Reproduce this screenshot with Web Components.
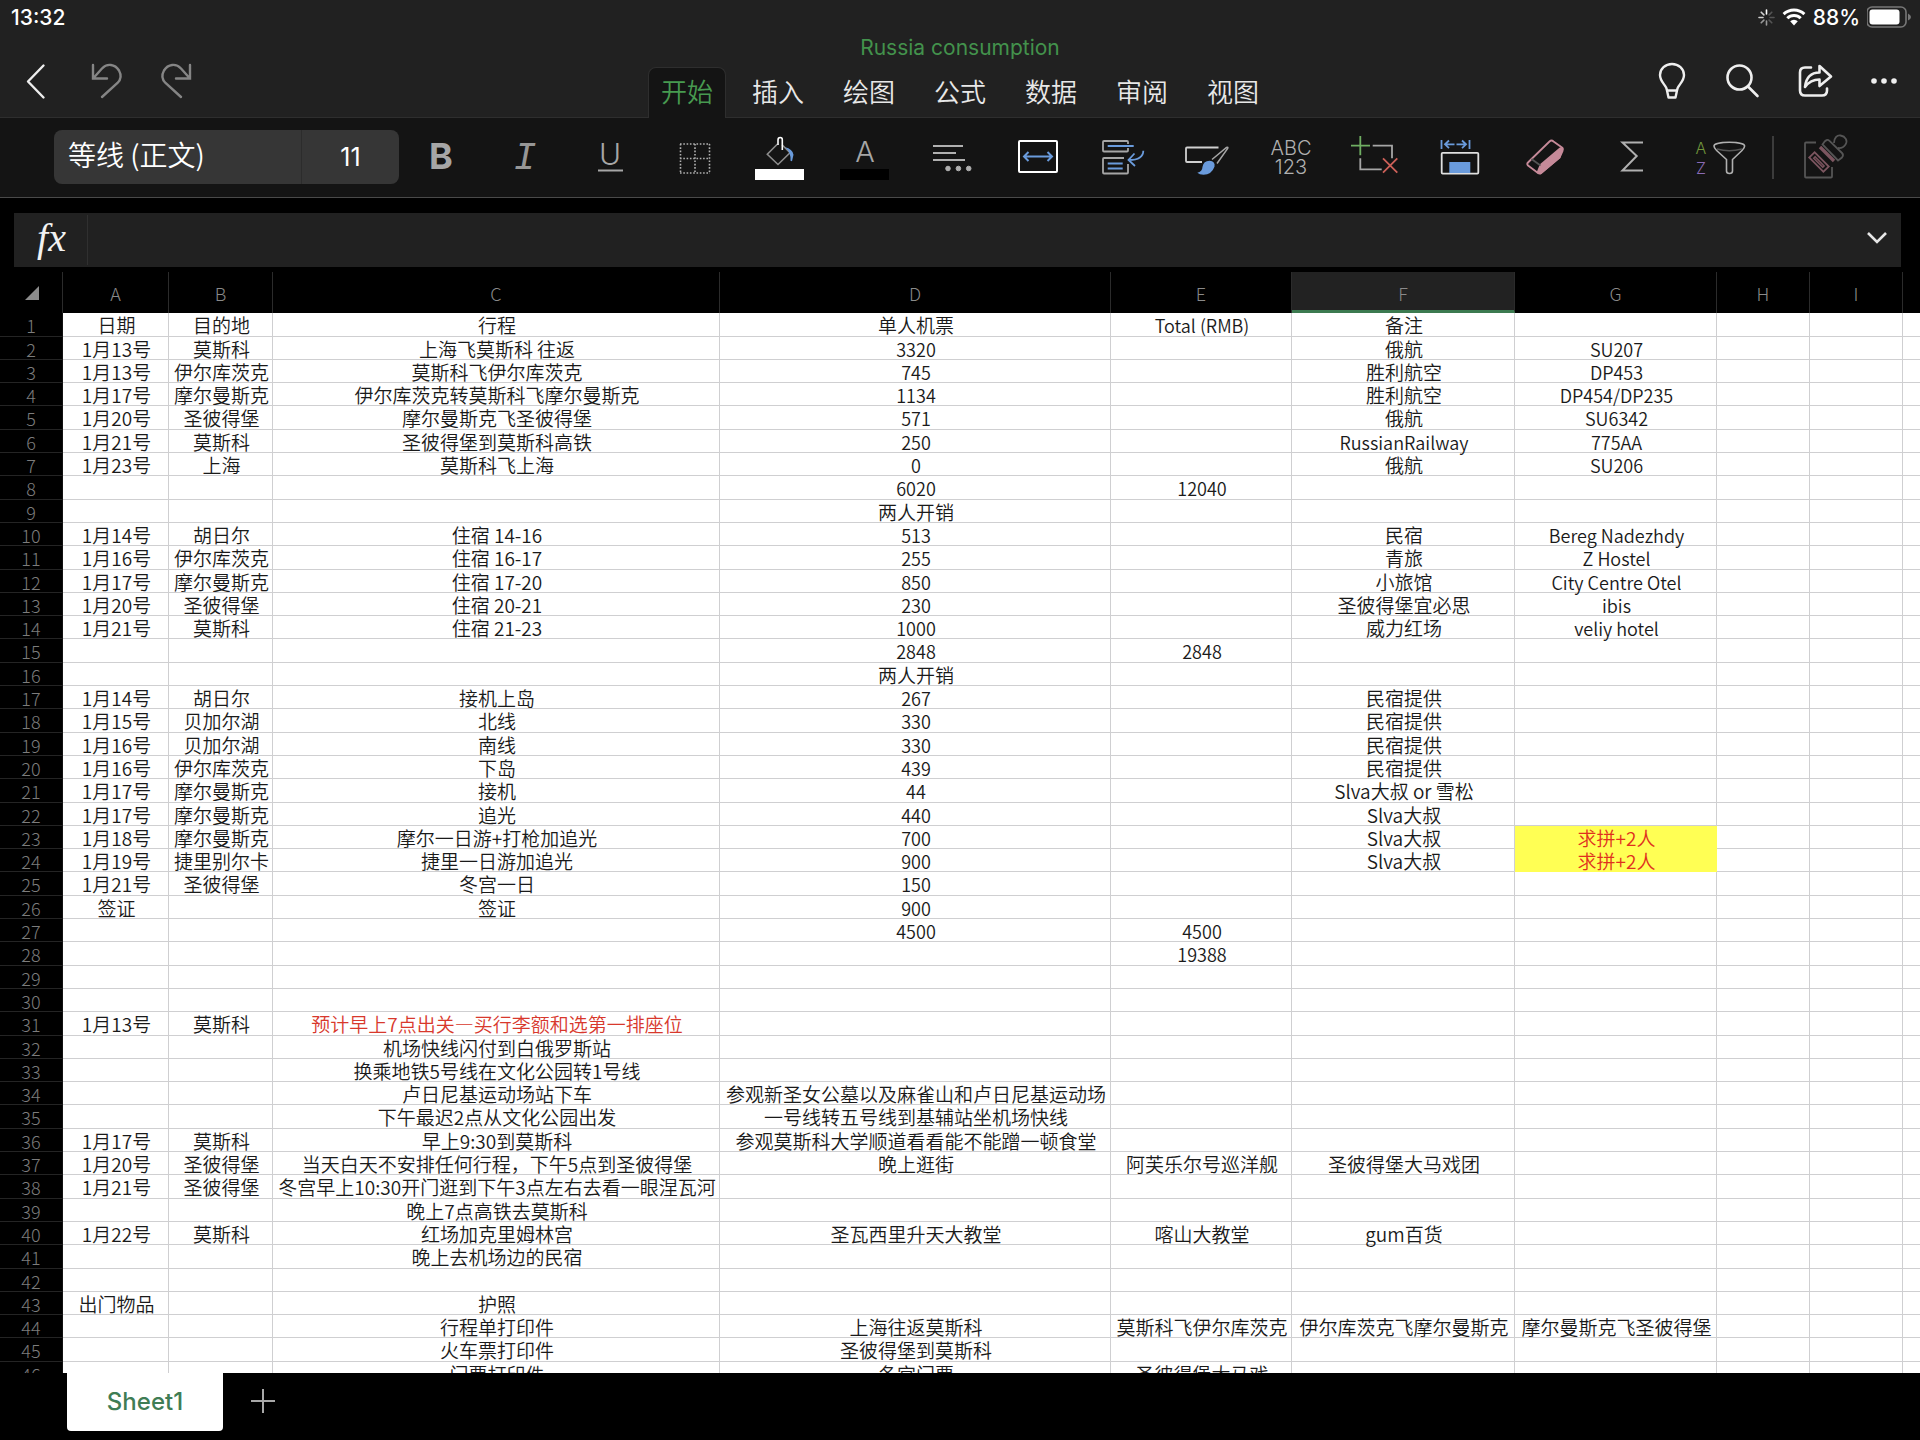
<!DOCTYPE html>
<html lang="zh-CN">
<head>
<meta charset="utf-8">
<title>Russia consumption</title>
<style>
  html, body { margin: 0; height: 100%; background: #000; }
  body { font-family: Inter, "Noto Sans CJK SC", sans-serif; color: #e6e6e6; overflow: hidden; }
</style>
</head>
<body>
<workbook-app></workbook-app>

<script>
const define = (name, html, setup) => {
  const tpl = document.createElement('template');
  tpl.innerHTML = html;
  customElements.define(name, class extends HTMLElement {
    constructor() {
      super();
      this.attachShadow({ mode: 'open' }).append(tpl.content.cloneNode(true));
    }
    connectedCallback() { if (setup) setup(this, this.shadowRoot); }
  });
};

/* Icon-only button; the drawing is slotted in */
define('icon-button', `
<style>
  :host { display: flex; }
  button { all: unset; flex: 1; display: flex; justify-content: center; cursor: pointer; }
  ::slotted(svg) { display: block; overflow: visible; }
</style>
<button type="button"><slot></slot></button>`, (el, root) => {
  root.querySelector('button').setAttribute('aria-label', el.getAttribute('label') || '');
});

define('ribbon-tab', `
<style>
  :host { display: block; }
  button { all: unset; box-sizing: border-box; height: 50px; padding: 0 12px 4px; border: 1px solid transparent; border-bottom: 0;
    border-radius: 8px 8px 0 0; font: 350 26px/44px "Noto Sans CJK SC", sans-serif; color: #e8e8e8; cursor: pointer; display: block; }
  :host([selected]) button { background: #141414; border-color: #2e2e2e; color: #479a50; height: 51px; padding-bottom: 5px; margin-bottom: -1px; }
</style>
<button type="button" role="tab"><slot></slot></button>`, (el, root) => {
  root.querySelector('button').setAttribute('aria-selected', el.hasAttribute('selected'));
});

define('status-bar', `
<style>
  :host { display: flex; justify-content: space-between; align-items: center; height: 34px; padding: 0 9px 0 11px; font-size: 21px; font-weight: 500; color: #fff; }
  .right { display: flex; align-items: center; gap: 7px; }
  svg { display: block; }
</style>
<span>13:32</span>
<div class="right">
  <svg width="17" height="17" viewBox="0 0 17 17" stroke-width="1.6" stroke-linecap="round" aria-hidden="true">
    <path d="M8.5 1v4" stroke="#fff"/><path d="M3.2 3.2l2.7 2.7M1 8.5h4" stroke="#cfcfcf"/><path d="M3.2 13.8l2.7-2.7M8.5 12v4" stroke="#999"/><path d="M13.8 13.8l-2.7-2.7M12 8.5h4M13.8 3.2l-2.7 2.7" stroke="#555"/>
  </svg>
  <svg width="24" height="18" viewBox="0 0 24 18" aria-hidden="true">
    <path d="M1.6 6.2a15 15 0 0 1 20.8 0M5.3 10.2a9.6 9.6 0 0 1 13.4 0" fill="none" stroke="#fff" stroke-width="3"/>
    <path d="M8.2 13.2a5.4 5.4 0 0 1 7.6 0L12 17.4z" fill="#fff"/>
  </svg>
  <span>88%</span>
  <svg width="44" height="26" viewBox="0 0 44 26" aria-hidden="true">
    <rect x="0" y="3" width="39" height="20" rx="5" fill="none" stroke="#777" stroke-width="1.6"/>
    <rect x="2.500" y="5.500" width="30" height="15" rx="3" fill="#fff"/>
    <path d="M41 9.500q3 1.500 3 3.500t-3 3.500z" fill="#777"/>
  </svg>
</div>`);

define('title-bar', `
<style>
  :host { display: grid; grid-template-columns: 1fr auto 1fr; height: 83px; border-bottom: 1px solid #2e2e2e; }
  .side { display: flex; align-items: flex-start; padding-top: 28px; }
  .left { padding-left: 16px; gap: 29px; }
  .right { justify-content: flex-end; padding-right: 15px; gap: 31px; }
  .mid { display: flex; flex-direction: column; }
  h1 { margin: 0; height: 33px; font-size: 21px; line-height: 27px; font-weight: 400; color: #43924c; text-align: center; }
  nav { display: flex; gap: 13px; }
</style>
<div class="side left">
  <icon-button label="返回"><svg width="40" height="40" viewBox="0 0 40 40" fill="none" stroke="#eee" stroke-width="2.4" stroke-linecap="round" stroke-linejoin="round"><path d="M27.500 3.500L12 19.500l15.500 16"/></svg></icon-button>
  <icon-button label="撤消"><svg width="40" height="40" viewBox="0 0 40 40" fill="none" stroke="#858585" stroke-width="2.4" stroke-linecap="round"><path d="M8 3v13.500h14M8.500 16L17 6.500C22 1 30 2 34 8.500c2.500 4.500 2 9-1.500 12.500L17 35"/></svg></icon-button>
  <icon-button label="恢复"><svg width="40" height="40" viewBox="0 0 40 40" fill="none" stroke="#858585" stroke-width="2.400" stroke-linecap="round"><path d="M36 3v13.500H22M35.500 16L27 6.500C22 1 14 2 10 8.500c-2.500 4.500-2 9 1.500 12.500L27 35"/></svg></icon-button>
</div>
<div class="mid">
  <h1>Russia consumption</h1>
  <nav role="tablist">
    <ribbon-tab selected>开始</ribbon-tab><ribbon-tab>插入</ribbon-tab><ribbon-tab>绘图</ribbon-tab><ribbon-tab>公式</ribbon-tab><ribbon-tab>数据</ribbon-tab><ribbon-tab>审阅</ribbon-tab><ribbon-tab>视图</ribbon-tab>
  </nav>
</div>
<div class="side right">
  <icon-button label="操作说明"><svg width="40" height="40" viewBox="0 0 40 40" fill="none" stroke="#eee" stroke-width="2.4" stroke-linejoin="round"><path d="M15 28.500c0-5-7-8-7-15.500a12 11 0 0 1 24 0c0 7.500-7 10.500-7 15.500l-1.500 7h-7zM15 28.500h10"/></svg></icon-button>
  <icon-button label="查找"><svg width="40" height="40" viewBox="0 0 40 40" fill="none" stroke="#eee" stroke-width="2.6" stroke-linecap="round"><circle cx="16.500" cy="15.500" r="12"/><path d="M25 24.500l9.500 9.500"/></svg></icon-button>
  <icon-button label="共享"><svg width="40" height="40" viewBox="0 0 40 40" fill="none" stroke="#eee" stroke-width="2.6" stroke-linecap="round" stroke-linejoin="round"><path d="M17 5.500h-6q-5 0-5 5v18q0 5 5 5h17q5 0 5-5v-2"/><path d="M11 25c1-9 6-14.500 14.500-14.500V4L37 14.500 25.500 24v-6.500C19 17.500 15 19.500 11 25z"/></svg></icon-button>
  <icon-button label="更多"><svg width="40" height="40" viewBox="0 0 40 40" fill="#eee"><circle cx="9" cy="19" r="2.8"/><circle cx="19" cy="19" r="2.8"/><circle cx="29" cy="19" r="2.8"/></svg></icon-button>
</div>`);

define('tool-bar', `
<style>
  :host { display: flex; height: 79px; padding: 0 40px 0 54px; background: #141414; border-bottom: 1px solid #4a4a4a; align-items: flex-start; }
  .font { display: flex; flex: 0 0 345px; box-sizing: border-box; height: 54px; margin-top: 12px; background: #363636; border-radius: 8px; }
  select { appearance: none; border: 0; background: none; color: #fff; height: 54px; margin: 0; outline: 0; box-sizing: border-box; }
  .name { flex: 1; padding: 0 0 6px 14px; border-right: 1px solid #2c2c2c; font: 350 28px/48px "Noto Sans CJK SC", sans-serif; }
  .size { width: 97px; text-align: center; text-align-last: center; font: 400 25px/54px Inter, sans-serif; }
  icon-button { flex: 0 1 85px; padding-top: 16px; }
  .wide { flex: 0 1 99px; }
  .last { flex: 0 1 107px; }
  hr { border: 0; width: 2px; height: 43px; margin: 18px -1px 0; background: #3c3c3c; }
  text { font-family: Inter, sans-serif; font-weight: 300; text-anchor: middle; }
</style>
<div class="font">
  <select class="name" aria-label="字体"><option>等线 (正文)</option></select>
  <select class="size" aria-label="字号"><option>11</option></select>
</div>
<icon-button label="加粗"><svg width="49" height="48"><text x="24" y="35" font-size="36" fill="#a6a6a6" style="font-weight:700">B</text></svg></icon-button>
<icon-button label="倾斜"><svg width="49" height="48"><text x="23" y="35" font-size="38" fill="#969696" style="font-family:'Liberation Mono',monospace;font-style:italic">I</text></svg></icon-button>
<icon-button label="下划线"><svg width="49" height="48"><text x="23" y="31" font-size="30" fill="#a6a6a6">U</text><path d="M11 36.500h25" stroke="#a6a6a6" stroke-width="2"/></svg></icon-button>
<icon-button label="边框"><svg width="49" height="48" fill="none" stroke="#b0b0b0" stroke-width="1.6" stroke-dasharray="1.600 1.700"><path d="M8.500 10v29M23 10v29M37.500 10v29M8 10h30M8 24.500h30M8 39h30"/></svg></icon-button>
<icon-button label="填充颜色"><svg width="49" height="48" fill="none" stroke-width="1.600"><path d="M20.500 10L10.300 20.300 21 30.500 33 18.700l-8-8" stroke="#8c8c8c"/><path d="M21 11V6q0-2.500 2.200-2.500T25.300 6v10" stroke="#fff"/><path d="M28 13.300q7.500 1.500 8.500 7.500l-1.500 6.500-1.500-.5q.5-9-5.500-13.500z" fill="#6a9bdc"/><rect x="-2" y="35" width="49" height="11" fill="#fff"/></svg></icon-button>
<icon-button label="字体颜色"><svg width="49" height="48"><text x="23" y="28" font-size="29" fill="#a6a6a6">A</text><rect x="-2" y="35" width="49" height="11" fill="#000"/></svg></icon-button>
<icon-button label="对齐"><svg width="49" height="48" fill="#b0b0b0" stroke="#b0b0b0"><path d="M6 12h30M6 19h23M6 26h32" stroke-width="2"/><circle cx="21" cy="34.500" r="2.300"/><circle cx="31.400" cy="34.500" r="2.300"/><circle cx="41.700" cy="34.500" r="2.300"/></svg></icon-button>
<icon-button label="合并"><svg width="49" height="48" fill="none" stroke-width="2"><rect x="7" y="7" width="38" height="31" rx="1" stroke="#fff"/><path d="M12 22.500h28M16.500 18L12 22.500l4.500 4.500M35.500 18l4.500 4.500-4.500 4.500" stroke="#6a9bdc"/></svg></icon-button>
<icon-button label="自动换行"><svg width="49" height="48" fill="none" stroke-width="1.800"><path d="M31 10V8q0-1-1-1H7q-1 0-1 1v8.500q0 1 1 1h23q1 0 1-1V14M27 24H7q-1 0-1 1v13.500q0 1 1 1h23q1 0 1-1V30" stroke="#a6a6a6"/><path d="M10.700 12h26M10.700 29.500h15M10.700 34.500h15M46.300 16.700q0 9-14.500 9.500M37.500 19.500l-6 6.500 6.500 6" stroke="#6a9bdc"/></svg></icon-button>
<icon-button label="单元格样式"><svg width="49" height="48" fill="none"><path d="M36.500 13.500H5q-1 0-1 1V27q0 1 1 1h15" stroke="#d0d0d0" stroke-width="1.800"/><path d="M30 25.500l14.500-12q2-.8 1.200 1L35 29.500" stroke="#a6a6a6" stroke-width="1.500"/><path d="M15.300 38.700q5-1 5.200-6 1-6 7-6 6 .5 5 6-3 8-11 8-4 0-6.200-2z" fill="#6a9bdc"/></svg></icon-button>
<icon-button label="数字格式"><svg width="49" height="48"><text x="24" y="21" font-size="20" fill="#b0b0b0">ABC</text><text x="24" y="40" font-size="20" fill="#b0b0b0">123</text></svg></icon-button>
<icon-button label="插入和删除单元格"><svg width="49" height="48" fill="none" stroke-width="1.800"><path d="M20.700 11.700H40v12.600M8.300 24.300v11h21.400" stroke="#a6a6a6"/><path d="M-1 11.700h19M8.300 2v19.300" stroke="#6fae62"/><path d="M31 24.300l14.300 14.400M45.300 24.300L31 38.700" stroke="#cc6058"/></svg></icon-button>
<icon-button label="单元格大小"><svg width="49" height="48" fill="none" stroke-width="1.800"><path d="M4.500 6v9M32.500 6v9M8 10.300h9.500M12 6.500l-4 3.800 4 3.800M19.500 10.300H29M25 6.500l4 3.800-4 3.800" stroke="#6a9bdc"/><rect x="4.700" y="18.800" width="36.600" height="20.800" rx="1" stroke="#e0e0e0"/><rect x="12.300" y="28" width="21" height="11" fill="#6a9bdc"/></svg></icon-button>
<icon-button label="清除"><svg width="49" height="48" fill="none" stroke="#c68a99" stroke-width="1.800" stroke-linejoin="round"><path d="M9 25.500L27.500 7.500q2-2 4 0l8.500 6q1.500 1.500.5 3.500l-3 6.500L19 39q-1.500 1-3 0l-10-7.500q-1.500-1.500 0-3z"/><path d="M40.500 14l-3 9.500L18.500 39.500l-3-1 3-7.500L38 14.500z" fill="#c68a99"/><path d="M9.500 25l9 6.500" stroke="#555"/></svg></icon-button>
<icon-button label="自动求和"><svg width="49" height="48" fill="none" stroke="#b0b0b0" stroke-width="2"><path d="M36 8.500H15.500L29.700 22 15.500 36.500H36"/></svg></icon-button>
<icon-button class="wide" label="排序和筛选"><svg width="49" height="48" fill="none" stroke="#b0b0b0" stroke-width="1.600"><text x="2" y="20" font-size="16" fill="#71953c" stroke="none">A</text><text x="2" y="40" font-size="16" fill="#8a6bb5" stroke="none">Z</text><path d="M15 12c0-5 30.600-5 30.600 0 0 2-1 3-2.600 4.500L33.500 25.500V37q0 2.500-3 2.500T27.500 37V25.500L17.600 16.500C16 15 15 14 15 12z"/><path d="M18 15q12 3.500 25 0" stroke="#555"/></svg></icon-button>
<hr>
<icon-button class="last" label="格式刷"><svg width="49" height="48" fill="none" stroke="#555" stroke-width="1.800"><path d="M14 8.500H4q-1 0-1 1V42.500q0 1 1 1h25q1 0 1-1V33"/><g transform="rotate(45 17 28)"><rect x="7" y="24.200" width="20" height="7.600" stroke="#7c5660"/><rect x="10.500" y="27" width="13" height="2.200" fill="#4b3238" stroke="#7c5660" stroke-width="1.200"/></g><path d="M18 13l14 14" stroke="#7c5660" stroke-width="3.400"/><path d="M20.500 10.500l2-2.800q2.500-3 5-.8L40 19q2 2 0 4.500L36 26.500zM32 9c0-5 3-8 6.500-7.500 5 1 7.500 5 5 9-2 3-4 4-7.500 3.500"/></svg></icon-button>`);

define('formula-bar', `
<style>
  :host { display: flex; align-items: center; height: 54px; margin: 15px 19px 5px 14px; background: #212121; }
  label { width: 74px; box-sizing: border-box; padding-left: 2px; text-align: center; font: italic 400 40px/46px "Liberation Serif", serif; color: #f2f2f2; height: 50px; border-right: 1px solid #303030; }
  input { flex: 1; border: 0; background: none; color: #fff; font: 22px Inter, sans-serif; outline: 0; padding: 0 12px; }
  icon-button { padding-right: 14px; }
</style>
<label for="fx">fx</label>
<input id="fx" type="text">
<icon-button label="展开编辑栏"><svg width="20" height="20" viewBox="0 0 20 20" fill="none" stroke="#e6e6e6" stroke-width="2.600"><path d="M1 3l9 9 9-9"/></svg></icon-button>`);

const ROWS = [
  ['日期','目的地','行程','单人机票','Total (RMB)','备注'],
  ['1月13号','莫斯科','上海飞莫斯科 往返','3320','','俄航','SU207'],
  ['1月13号','伊尔库茨克','莫斯科飞伊尔库茨克','745','','胜利航空','DP453'],
  ['1月17号','摩尔曼斯克','伊尔库茨克转莫斯科飞摩尔曼斯克','1134','','胜利航空','DP454/DP235'],
  ['1月20号','圣彼得堡','摩尔曼斯克飞圣彼得堡','571','','俄航','SU6342'],
  ['1月21号','莫斯科','圣彼得堡到莫斯科高铁','250','','RussianRailway','775AA'],
  ['1月23号','上海','莫斯科飞上海','0','','俄航','SU206'],
  ['','','','6020','12040'],
  ['','','','两人开销'],
  ['1月14号','胡日尔','住宿 14-16','513','','民宿','Bereg Nadezhdy'],
  ['1月16号','伊尔库茨克','住宿 16-17','255','','青旅','Z Hostel'],
  ['1月17号','摩尔曼斯克','住宿 17-20','850','','小旅馆','City Centre Otel'],
  ['1月20号','圣彼得堡','住宿 20-21','230','','圣彼得堡宜必思','ibis'],
  ['1月21号','莫斯科','住宿 21-23','1000','','威力红场','veliy hotel'],
  ['','','','2848','2848'],
  ['','','','两人开销'],
  ['1月14号','胡日尔','接机上岛','267','','民宿提供'],
  ['1月15号','贝加尔湖','北线','330','','民宿提供'],
  ['1月16号','贝加尔湖','南线','330','','民宿提供'],
  ['1月16号','伊尔库茨克','下岛','439','','民宿提供'],
  ['1月17号','摩尔曼斯克','接机','44','','Slva大叔 or 雪松'],
  ['1月17号','摩尔曼斯克','追光','440','','Slva大叔'],
  ['1月18号','摩尔曼斯克','摩尔一日游+打枪加追光','700','','Slva大叔','求拼+2人'],
  ['1月19号','捷里别尔卡','捷里一日游加追光','900','','Slva大叔','求拼+2人'],
  ['1月21号','圣彼得堡','冬宫一日','150'],
  ['签证','','签证','900'],
  ['','','','4500','4500'],
  ['','','','','19388'],
  [], [],
  ['1月13号','莫斯科','预计早上7点出关—买行李额和选第一排座位'],
  ['','','机场快线闪付到白俄罗斯站'],
  ['','','换乘地铁5号线在文化公园转1号线'],
  ['','','卢日尼基运动场站下车','参观新圣女公墓以及麻雀山和卢日尼基运动场'],
  ['','','下午最迟2点从文化公园出发','一号线转五号线到基辅站坐机场快线'],
  ['1月17号','莫斯科','早上9:30到莫斯科','参观莫斯科大学顺道看看能不能蹭一顿食堂'],
  ['1月20号','圣彼得堡','当天白天不安排任何行程，下午5点到圣彼得堡','晚上逛街','阿芙乐尔号巡洋舰','圣彼得堡大马戏团'],
  ['1月21号','圣彼得堡','冬宫早上10:30开门逛到下午3点左右去看一眼涅瓦河'],
  ['','','晚上7点高铁去莫斯科'],
  ['1月22号','莫斯科','红场加克里姆林宫','圣瓦西里升天大教堂','喀山大教堂','gum百货'],
  ['','','晚上去机场边的民宿'],
  [],
  ['出门物品','','护照'],
  ['','','行程单打印件','上海往返莫斯科','莫斯科飞伊尔库茨克','伊尔库茨克飞摩尔曼斯克','摩尔曼斯克飞圣彼得堡'],
  ['','','火车票打印件','圣彼得堡到莫斯科'],
  ['','','门票打印件','冬宫门票','圣彼得堡大马戏']
];
const CELL_CLASS = { '23G': 'hot', '24G': 'hot', '31C': 'red' };

define('sheet-grid', `
<style>
  :host { display: block; flex: 1; min-height: 0; overflow: hidden; background: #fff; }
  table { width: 100%; table-layout: fixed; border-collapse: separate; border-spacing: 0; font: 350 19px/20px "Noto Sans CJK SC", sans-serif; color: #1a1a1a; }
  th, td { box-sizing: border-box; padding: 2px 0 0; text-align: center; vertical-align: top; font-weight: inherit; white-space: nowrap; }
  thead th { height: 41px; padding-top: 11px; background: #000; color: #8a8a8a; font-size: 18px; font-weight: 300; border-right: 1px solid #2b2b2b; }
  thead th.sel { background: #222; border-bottom: 3px solid #3c7a50; }
  thead svg { display: block; margin: 3px 0 0 25px; }
  tbody tr { height: 23px; }
  tbody tr:nth-child(10n+1), tbody tr:nth-child(10n+5), tbody tr:nth-child(10n+8) { height: 24px; }
  tbody th { background: #000; color: #7c7c7c; font-size: 18px; font-weight: 300; border-bottom: 1px solid #242424; border-right: 1px solid #111; }
  td { padding-left: 2px; background: #fff; border-right: 1px solid #cfcfd1; border-bottom: 1px solid #cfcfd1; }
  th:last-child, td:last-child { border-right: 0; }
  .latin { font-size: 18px; }
  .red { color: #d8382c; }
  .hot { background: #ffff54; color: #e0301e; border-color: #ffff54; }
</style>
<table>
  <colgroup><col style="width:63px"><col style="width:106px"><col style="width:104px"><col style="width:447px"><col style="width:391px"><col style="width:181px"><col style="width:223px"><col style="width:202px"><col style="width:93px"><col style="width:93px"><col></colgroup>
  <thead><tr><th aria-label="全选"><svg width="14" height="14" aria-hidden="true"><path d="M14 0v14H0z" fill="#8c8c8c"/></svg></th></tr></thead>
  <tbody></tbody>
</table>`, (el, root) => {
  const letters = 'ABCDEFGHI';
  const head = root.querySelector('thead tr');
  for (const l of [...letters, '']) {
    const th = document.createElement('th');
    th.textContent = l;
    if (l === 'F') th.className = 'sel';
    head.append(th);
  }
  const body = root.querySelector('tbody');
  ROWS.forEach((row, i) => {
    const tr = document.createElement('tr');
    const th = document.createElement('th');
    th.scope = 'row';
    th.textContent = i + 1;
    tr.append(th);
    for (let c = 0; c < 10; c++) {
      const td = document.createElement('td');
      const t = row[c] || '';
      td.textContent = t;
      if (t && /^[\x20-\x7e]+$/.test(t)) td.className = 'latin';
      const k = CELL_CLASS[(i + 1) + letters[c]];
      if (k) td.classList.add(k);
      tr.append(td);
    }
    body.append(tr);
  });
});

define('sheet-tabs', `
<style>
  :host { display: flex; height: 67px; padding-left: 67px; background: #000; gap: 28px; }
  button { all: unset; box-sizing: border-box; width: 156px; height: 58px; border-radius: 0 0 4px 4px; background: #fff; color: #3f7d55; font-size: 24px; line-height: 58px; font-weight: 500; text-align: center; cursor: pointer; }
  icon-button { align-items: flex-start; padding-top: 16px; }
</style>
<button type="button">Sheet1</button>
<icon-button label="新建工作表"><svg width="24" height="24" stroke="#a8a8a8" stroke-width="2"><path d="M12 0v24M0 12h24"/></svg></icon-button>`);

define('workbook-app', `
<style>
  :host { display: flex; flex-direction: column; height: 100vh; }
  header { background: #212121; }
</style>
<header><status-bar></status-bar><title-bar></title-bar></header>
<tool-bar role="toolbar"></tool-bar>
<formula-bar></formula-bar>
<sheet-grid></sheet-grid>
<sheet-tabs></sheet-tabs>`);
</script>
</body>
</html>
